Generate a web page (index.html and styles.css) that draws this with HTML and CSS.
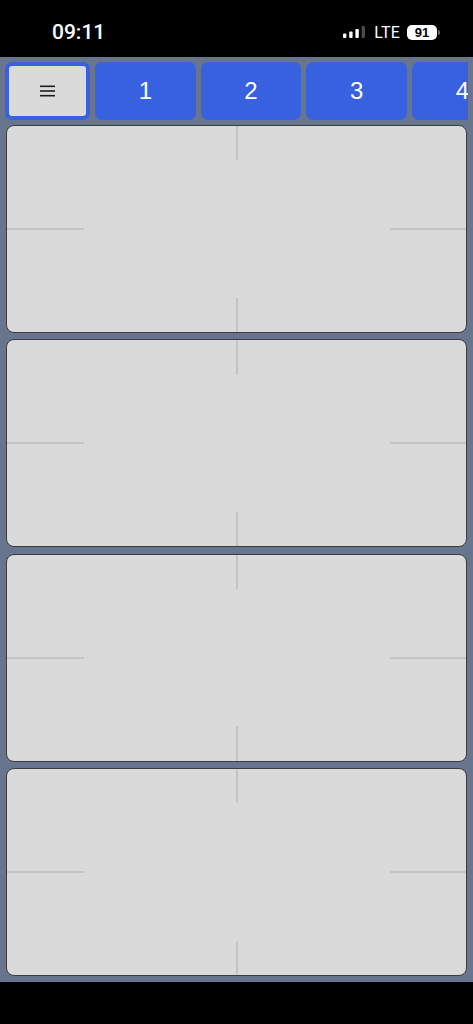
FILE: index.html
```html
<!DOCTYPE html>
<html lang="en">
<head>
<meta charset="utf-8">
<meta name="viewport" content="width=device-width, initial-scale=1">
<title>Panels</title>
<link rel="stylesheet" href="styles.css">
</head>
<body>
<div class="statusbar">
  <div class="time">09:11</div>
  <div class="status-right">
    <svg class="signal" width="23" height="12" viewBox="0 0 23 12" aria-hidden="true">
      <rect x="0" y="7.5" width="3.4" height="4.5" rx="1" fill="#fff"/>
      <rect x="6.2" y="5.5" width="3.4" height="6.5" rx="1" fill="#fff"/>
      <rect x="12.4" y="3" width="3.4" height="9" rx="1" fill="#fff"/>
      <rect x="18.6" y="0" width="3.4" height="12" rx="1" fill="#4a4a4a"/>
    </svg>
    <span class="lte">LTE</span>
    <div class="battery">
      <span class="battery-body">91</span>
      <span class="battery-nub"></span>
    </div>
  </div>
</div>
<div class="app">
  <div class="tabs">
    <button class="tab tab-menu" type="button">
      <span class="menu-inner">
        <svg width="15" height="12" viewBox="0 0 15 12" aria-hidden="true">
          <rect x="0" y="0.5" width="15" height="1.6" fill="#1e1e1e"/>
          <rect x="0" y="5.2" width="15" height="1.6" fill="#1e1e1e"/>
          <rect x="0" y="9.9" width="15" height="1.6" fill="#1e1e1e"/>
        </svg>
      </span>
    </button>
    <button class="tab" type="button">1</button>
    <button class="tab" type="button">2</button>
    <button class="tab" type="button">3</button>
    <button class="tab" type="button">4</button>
    <button class="tab" type="button">5</button>
  </div>
  <div class="panels">
    <div class="panel"><span class="mark mark-top"></span><span class="mark mark-bottom"></span><span class="mark mark-left"></span><span class="mark mark-right"></span></div>
    <div class="panel"><span class="mark mark-top"></span><span class="mark mark-bottom"></span><span class="mark mark-left"></span><span class="mark mark-right"></span></div>
    <div class="panel"><span class="mark mark-top"></span><span class="mark mark-bottom"></span><span class="mark mark-left"></span><span class="mark mark-right"></span></div>
    <div class="panel"><span class="mark mark-top"></span><span class="mark mark-bottom"></span><span class="mark mark-left"></span><span class="mark mark-right"></span></div>
  </div>
</div>
<div class="home-area"></div>
</body>
</html>
```
FILE: styles.css
```css
* {
  box-sizing: border-box;
}

html, body {
  margin: 0;
  padding: 0;
  background: #000;
}

body {
  width: 473px;
  height: 1024px;
  overflow: hidden;
  font-family: "Liberation Sans", Arial, sans-serif;
  display: flex;
  flex-direction: column;
}

.statusbar {
  height: 57px;
  flex: 0 0 57px;
  background: #000;
  color: #fff;
  display: flex;
  align-items: center;
  justify-content: space-between;
  padding: 0 33px 0 52px;
}

.time {
  font-family: Roboto, "Liberation Sans", sans-serif;
  font-size: 21px;
  font-weight: 500;
  margin-top: 7px;
}

.status-right {
  display: flex;
  align-items: center;
  margin-top: 7px;
}

.signal {
  display: block;
  margin-right: 8px;
}

.lte {
  font-family: Roboto, "Liberation Sans", sans-serif;
  font-size: 16px;
  font-weight: 400;
  letter-spacing: 0.2px;
  margin-right: 7px;
}

.battery {
  display: flex;
  align-items: center;
}

.battery-body {
  width: 30px;
  height: 15px;
  border-radius: 5px;
  background: #fff;
  color: #000;
  font-size: 13px;
  font-weight: 700;
  line-height: 15px;
  text-align: center;
}

.battery-nub {
  width: 2px;
  height: 5px;
  margin-left: 1px;
  border-radius: 0 2px 2px 0;
  background: #6b6b6b;
}

.app {
  height: 925px;
  flex: 0 0 925px;
  background: #67758f;
  padding: 5px 5px 6px 5px;
  display: flex;
  flex-direction: column;
}

.tabs {
  display: flex;
  gap: 5px;
  height: 58px;
  flex: 0 0 58px;
  overflow: hidden;
}

.tab {
  flex: 0 0 100.7px;
  height: 58px;
  border: none;
  border-radius: 7px;
  background: #3861e0;
  color: #fff;
  font-family: "Liberation Sans", Arial, sans-serif;
  font-size: 24px;
  font-weight: 400;
  padding: 0;
  margin: 0;
  display: flex;
  align-items: center;
  justify-content: center;
}

.tab-menu {
  flex: 0 0 85px;
  padding: 4px;
  background: #3861e0;
}

.menu-inner {
  width: 100%;
  height: 100%;
  border-radius: 3px;
  background: #dadada;
  display: flex;
  align-items: center;
  justify-content: center;
}

.menu-inner svg {
  display: block;
}

.panels {
  flex: 1;
  display: flex;
  flex-direction: column;
  gap: 6.33px;
  margin: 5px 1px 0 1px;
}

.panel {
  flex: 1;
  position: relative;
  overflow: hidden;
  background: #dadada;
  border: 1px solid #3c3c3c;
  border-radius: 8px;
}

.mark {
  position: absolute;
  background: #c4c4c4;
}

.mark-top,
.mark-bottom {
  left: calc(50% - 1px);
  width: 2px;
  height: 16.67%;
}

.mark-top {
  top: 0;
}

.mark-bottom {
  bottom: 0;
}

.mark-left,
.mark-right {
  top: calc(50% - 1px);
  height: 2px;
  width: 16.67%;
}

.mark-left {
  left: 0;
}

.mark-right {
  right: 0;
}

.home-area {
  flex: 1;
  background: #000;
}
```
